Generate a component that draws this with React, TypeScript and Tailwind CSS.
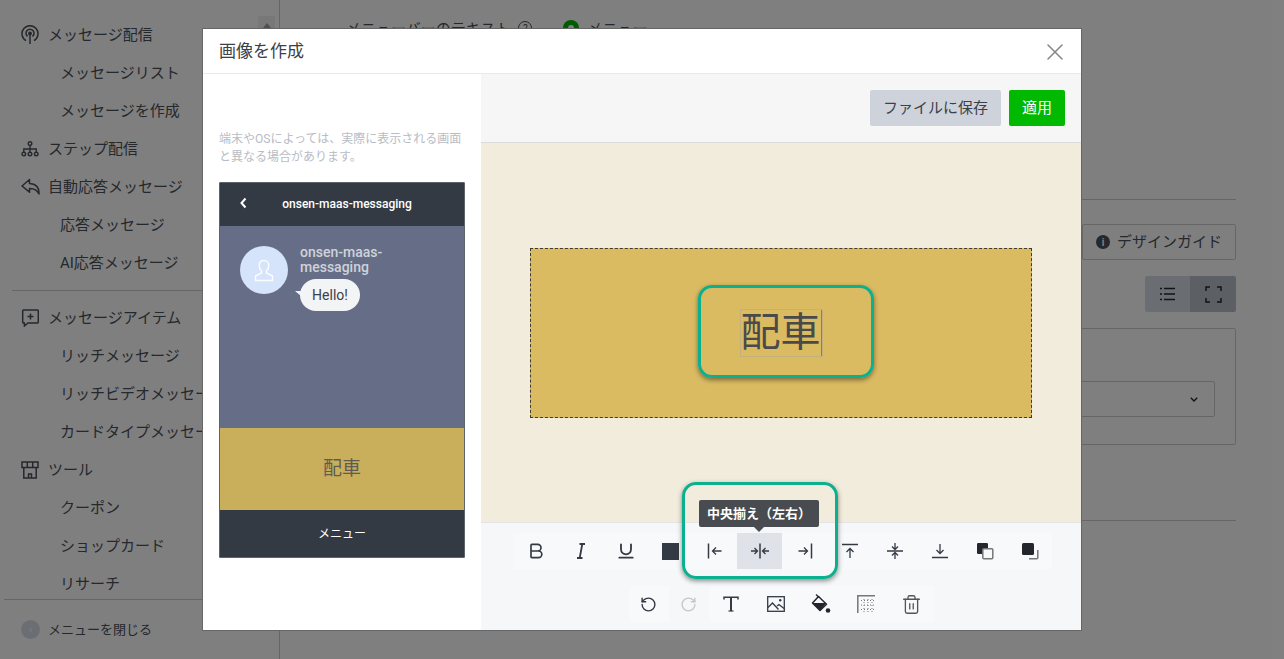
import React from 'react';
import { Bold, Underline, RotateCcw, RotateCw, Trash2, X } from 'lucide-react';

// Sidebar icons
const BroadcastIcon = () => (
  <svg width="18" height="20" viewBox="0 0 18 20" fill="none" stroke="currentColor" strokeWidth="1.5">
    <path d="M5 15.6A8 8 0 1 1 13 15.6" />
    <path d="M6.6 11.4A4 4 0 1 1 11.4 11.4" />
    <circle cx="9" cy="8.4" r="1.2" fill="currentColor" />
    <path d="M9 9v10" />
  </svg>
);

const SitemapIcon = () => (
  <svg width="18" height="16" viewBox="0 0 18 16" fill="none" stroke="currentColor" strokeWidth="1.4">
    <circle cx="9" cy="2.6" r="1.8" />
    <circle cx="2.8" cy="13" r="1.8" />
    <circle cx="9" cy="13" r="1.8" />
    <circle cx="15.2" cy="13" r="1.8" />
    <path d="M9 4.4v6.8M2.8 11.2V8h12.4v3.2" />
  </svg>
);

const ReplyIcon = () => (
  <svg width="20" height="18" viewBox="0 0 20 18" fill="none" stroke="currentColor" strokeWidth="1.5" strokeLinejoin="round">
    <path d="M8.5 1.5 1 8l7.5 6.2v-3.8c4.6-.2 7.4 1 9.5 5.6.3-6-2.5-10-9.5-10.4z" />
  </svg>
);

const MessagePlusIcon = () => (
  <svg width="18" height="18" viewBox="0 0 18 18" fill="none" stroke="currentColor" strokeWidth="1.5">
    <path d="M2.5 1h14a.8.8 0 0 1 .8.8v11.4a.8.8 0 0 1-.8.8H7l-3.6 3v-3H2.500a.8.8 0 0 1-.8-.8V1.800a.8.8 0 0 1 .8-.8z" />
    <path d="M9.500 4.500v6M6.500 7.500h6" />
  </svg>
);

const StoreIcon = () => (
  <svg width="18" height="18" viewBox="0 0 18 18" fill="none" stroke="currentColor" strokeWidth="1.5">
    <path d="M1 1h16v5.500H1zM6.300 1v5.500M11.700 1v5.500" />
    <path d="M2.800 6.500V17h12.400V6.500M7.500 17v-4h3v4" />
  </svg>
);

// Editor toolbar icons
const ItalicIcon = () => (
  <svg width="10" height="16" viewBox="0 0 10 16" fill="none" stroke="currentColor" strokeWidth="1.800">
    <path d="M3.500 1H9M1 15h5.500M6.300 1 3.700 15" />
  </svg>
);

const AlignLeftIcon = () => (
  <svg width="16" height="16" viewBox="0 0 16 16" fill="none" stroke="currentColor" strokeWidth="1.3">
    <path d="M1.500 0.500v15" strokeWidth="1.500" />
    <path d="M14.500 8H5.500M9 4.500 5.500 8 9 11.500" />
  </svg>
);

const AlignCenterIcon = () => (
  <svg width="20" height="16" viewBox="0 0 20 16" fill="none" stroke="currentColor" strokeWidth="1.3">
    <path d="M10 0.500v15" strokeWidth="1.500" />
    <path d="M1 8h6M4.500 5 7.500 8l-3 3M19 8h-6M15.500 5l-3 3 3 3" />
  </svg>
);

const AlignRightIcon = () => (
  <svg width="16" height="16" viewBox="0 0 16 16" fill="none" stroke="currentColor" strokeWidth="1.3">
    <path d="M14.500 0.500v15" strokeWidth="1.500" />
    <path d="M1.500 8h9M7 4.500 10.500 8 7 11.500" />
  </svg>
);

const AlignTopIcon = () => (
  <svg width="16" height="16" viewBox="0 0 16 16" fill="none" stroke="currentColor" strokeWidth="1.3">
    <path d="M0 1.500h16" strokeWidth="1.500" />
    <path d="M8 15V5.500M4.500 9 8 5.500 11.500 9" />
  </svg>
);

const AlignMiddleIcon = () => (
  <svg width="16" height="18" viewBox="0 0 16 18" fill="none" stroke="currentColor" strokeWidth="1.3">
    <path d="M0 9h16" strokeWidth="1.500" />
    <path d="M8 1v6M5 4.500 8 7.500l3-3M8 17v-6M5 13.500l3-3 3 3" />
  </svg>
);

const AlignBottomIcon = () => (
  <svg width="16" height="16" viewBox="0 0 16 16" fill="none" stroke="currentColor" strokeWidth="1.3">
    <path d="M0 14.500h16" strokeWidth="1.500" />
    <path d="M8 1v9.500M4.500 7 8 10.500 11.500 7" />
  </svg>
);

const BringFrontIcon = () => (
  <svg width="18" height="18" viewBox="0 0 18 18">
    <rect x="1" y="1" width="11" height="11" rx="1.200" fill="#23262c" />
    <rect x="6.800" y="6.800" width="10" height="10" rx="1" fill="#f8f9fb" stroke="#777" strokeWidth="1.500" />
  </svg>
);

const SendBackIcon = () => (
  <svg width="18" height="18" viewBox="0 0 18 18">
    <path d="M16.800 8v7.800a1 1 0 0 1-1 1H8" fill="none" stroke="#777" strokeWidth="1.500" />
    <rect x="1" y="1" width="12" height="12" rx="1.500" fill="#23262c" />
  </svg>
);

const TextIcon = () => (
  <svg width="16" height="16" viewBox="0 0 16 16" fill="none" stroke="currentColor">
    <path d="M1 3.500V1.200h14v2.300" strokeWidth="1.500" />
    <path d="M8 1.200V15" strokeWidth="2" />
    <path d="M5.500 15h5" strokeWidth="1.200" />
  </svg>
);

const ImageIcon = () => (
  <svg width="18" height="16" viewBox="0 0 18 16" fill="none" stroke="currentColor" strokeWidth="1.300">
    <rect x="0.700" y="0.700" width="16.600" height="14.600" />
    <path d="M1 11.500 5.500 7l6 6.500M10 10l2-1.500 5 4" />
    <circle cx="13.200" cy="4.200" r="1.200" fill="currentColor" stroke="none" />
  </svg>
);

const FillIcon = () => (
  <svg width="20" height="20" viewBox="0 0 20 20">
    <path d="M7.500 2.500 15.500 10.300 9 16.500 1.500 9z" fill="none" stroke="#23262c" strokeWidth="1.500" strokeLinejoin="round" />
    <path d="M1.500 9h14l-6.500 7.500z" fill="#23262c" />
    <path d="M5 .5l3 3" stroke="#23262c" strokeWidth="1.300" />
    <circle cx="17" cy="16.500" r="2.300" fill="#23262c" />
  </svg>
);

const GridCropIcon = () => (
  <svg width="18" height="18" viewBox="0 0 18 18" fill="none">
    <path d="M.8 18V.8H18" stroke="#777" strokeWidth="1.500" />
    <path d="M4 5.500h14M4 10h14M4 14.500h14M7 4v14M11 4v14M15 4v14" stroke="#777" strokeWidth="1" strokeDasharray="1 2" />
  </svg>
);

const navItems: { label: string; sub?: boolean; icon?: React.ReactNode; divider?: boolean }[] = [
  { label: 'メッセージ配信', icon: <BroadcastIcon /> },
  { label: 'メッセージリスト', sub: true },
  { label: 'メッセージを作成', sub: true },
  { label: 'ステップ配信', icon: <SitemapIcon /> },
  { label: '自動応答メッセージ', icon: <ReplyIcon /> },
  { label: '応答メッセージ', sub: true },
  { label: 'AI応答メッセージ', sub: true, divider: true },
  { label: 'メッセージアイテム', icon: <MessagePlusIcon /> },
  { label: 'リッチメッセージ', sub: true },
  { label: 'リッチビデオメッセージ', sub: true },
  { label: 'カードタイプメッセージ', sub: true },
  { label: 'ツール', icon: <StoreIcon /> },
  { label: 'クーポン', sub: true },
  { label: 'ショップカード', sub: true },
  { label: 'リサーチ', sub: true },
];

const Sidebar = () => (
  <aside className="relative flex h-full w-[280px] shrink-0 flex-col border-r border-[#c9ccd1] text-[15px] text-[#4b5059]">
    <div className="absolute right-[4px] top-[16px] flex h-[14px] w-[17px] items-start justify-center bg-[#f0f0f0] pt-[7px]">
      <div className="h-0 w-0 border-x-[4px] border-b-[5px] border-x-transparent border-b-[#a0a0a0]" />
    </div>
    <nav className="min-h-0 flex-1 overflow-hidden pl-[12px] pt-[16px]">
      {navItems.map((item) => (
        <React.Fragment key={item.label}>
          <div className={`flex h-[38px] items-center whitespace-nowrap ${item.sub ? 'pl-[48px]' : 'pl-[9px]'}`}>
            {item.icon && <span className="flex w-[27px] shrink-0 items-center">{item.icon}</span>}
            {item.label}
          </div>
          {item.divider && (
            <div className="flex h-[17px] items-center">
              <div className="h-px w-full bg-[#c9ccd1]" />
            </div>
          )}
        </React.Fragment>
      ))}
    </nav>
    <div className="ml-[4px] flex h-[60px] items-center gap-[8px] border-t border-[#c9ccd1] pl-[17px] text-[13px]">
      <div className="flex h-[19px] w-[19px] items-center justify-center rounded-full bg-[#d6dee9] text-[10px] text-white">‹</div>
      メニューを閉じる
    </div>
  </aside>
);

const MainBehind = () => (
  <main className="min-w-0 flex-1 pr-[48px] text-[15px] text-[#4b5059]">
    <div className="flex h-[58px] items-start gap-[8px] pl-[66px] pt-[18px]">
      <span>メニューバーのテキスト</span>
      <span className="mt-[3px] flex h-[14px] w-[14px] items-center justify-center rounded-full border border-[#4b5059] text-[10px]">?</span>
      <span className="ml-[23px] mt-[2px] flex h-[16px] w-[16px] items-center justify-center rounded-full bg-[#00b900]">
        <span className="h-[6px] w-[6px] rounded-full bg-white" />
      </span>
      <span>メニュー</span>
    </div>
    <div className="mt-[141px] h-px bg-[#ccc]" />
    <div className="mt-[24px] flex justify-end">
      <div className="flex h-[36px] w-[154px] items-center gap-[7px] rounded-[2px] border border-[#ccc] pl-[13px]">
        <span className="flex h-[14px] w-[14px] items-center justify-center rounded-full bg-[#4b5059] text-[10px] font-bold text-white">i</span>
        デザインガイド
      </div>
    </div>
    <div className="mt-[16px] flex justify-end">
      <div className="flex h-[36px] w-[91px] overflow-hidden rounded-[2px] text-[#23262c]">
        <div className="flex w-[45px] items-center justify-center bg-[#d5dae2]">
          <svg width="15" height="14" viewBox="0 0 15 14" fill="none" stroke="currentColor" strokeWidth="1.300">
            <path d="M4 1.500h11M4 7h11M4 12.500h11M0 1.500h2M0 7h2M0 12.500h2" />
          </svg>
        </div>
        <div className="flex w-[46px] items-center justify-center bg-[#b8bec9]">
          <svg width="17" height="17" viewBox="0 0 17 17" fill="none" stroke="currentColor" strokeWidth="1.500">
            <path d="M1 5V1h4M12 1h4v4M16 12v4h-4M5 16H1v-4" />
          </svg>
        </div>
      </div>
    </div>
    <div className="mt-[16px] h-[117px] rounded-[2px] border border-[#ccc] px-[20px] pt-[52px]">
      <div className="flex h-[36px] items-center justify-end rounded-[2px] border border-[#ccc] pr-[16px]">
        <svg width="8" height="5" viewBox="0 0 8 5" fill="none" stroke="#23262c" strokeWidth="1.400">
          <path d="M.8.8 4 4 7.200.8" />
        </svg>
      </div>
    </div>
    <div className="mt-[75px] h-px bg-[#ccc]" />
  </main>
);

const PhonePreview = () => (
  <div className="w-[278px] shrink-0 bg-white px-[16px] pt-[56px]">
    <p className="text-[12px] leading-[18px] text-[#b7bcc4]">端末やOSによっては、実際に表示される画面と異なる場合があります。</p>
    <div className="mt-[16px] flex h-[376px] w-[246px] flex-col overflow-hidden rounded-[1px] border border-[#5d626b] bg-[#343a43]">
      <div className="relative flex h-[43px] shrink-0 items-center justify-center pb-[2px] pl-[10px] text-[12px] font-medium text-white">
        <svg className="absolute left-[20px] top-[14px]" width="7" height="12" viewBox="0 0 7 12" fill="none" stroke="white" strokeWidth="2">
          <path d="M5.500 1.500 1.500 6l4 4.500" />
        </svg>
        onsen-maas-messaging
      </div>
      <div className="flex h-[202px] shrink-0 gap-[12px] bg-[#666e87] pl-[20px] pt-[20px]">
        <div className="flex h-[48px] w-[48px] shrink-0 items-center justify-center rounded-full bg-[#d5e3fb]">
          <svg width="20" height="23" viewBox="0 0 20 23" fill="none" stroke="white" strokeWidth="1.500" opacity="0.9">
            <path d="M10 1.500c-3 0-4.800 2.200-4.800 5 0 2.300 1 4.200 2.400 5.300v2.200L1.500 17v4.500h17V17l-6.100-3v-2.200c1.400-1.100 2.400-3 2.400-5.300 0-2.800-1.800-5-4.800-5z" />
          </svg>
        </div>
        <div className="-mt-[1px]">
          <div className="w-[110px] text-[14px] font-medium leading-[15px] text-[#cfd2d9]">onsen-maas-messaging</div>
          <div className="relative mt-[4px] flex h-[32px] w-[60px] items-center justify-center rounded-full bg-[#f3f4f6] text-[14px] text-[#3c4048]">
            Hello!
            <div className="absolute -left-[5px] top-[12px] h-0 w-0 border-l-[6px] border-t-[5px] border-l-transparent border-t-[#f3f4f6]" />
          </div>
        </div>
      </div>
      <div className="flex h-[82px] shrink-0 items-center justify-center bg-[#c9ae5b] text-[19px] text-[#5f5c52]">配車</div>
      <div className="flex flex-1 items-center justify-center text-[12px] text-white">メニュー</div>
    </div>
  </div>
);

const ToolBtn = ({ children, active, narrow }: { children: React.ReactNode; active?: boolean; narrow?: boolean }) => (
  <div className={`flex h-[36px] items-center justify-center text-[#343a43] ${narrow ? 'w-[44px]' : 'w-[45px]'} ${active ? 'bg-[#dfe2e8]' : ''}`}>
    {children}
  </div>
);

const EditorPane = () => (
  <div className="flex min-w-0 flex-1 flex-col bg-[#f6f7f8]">
    <div className="flex h-[69px] shrink-0 items-center justify-end gap-[8px] border-b border-[#d9dbde] bg-[#f6f6f7] pr-[16px] text-[15px]">
      <button className="h-[36px] w-[131px] rounded-[2px] bg-[#ced3db] text-[#3c4048]">ファイルに保存</button>
      <button className="h-[36px] w-[56px] rounded-[2px] bg-[#00b900] text-white">適用</button>
    </div>
    <div className="flex h-[380px] shrink-0 items-center justify-center border-b border-[#e3e4e6] bg-[#f2ecdc]">
      <div className="relative flex h-[170px] w-[502px] items-center justify-center border border-dashed border-[#3b3b3b] bg-[#dbbb62]">
        <div className="flex h-[48px] w-[83px] items-center whitespace-nowrap border border-[#c4b07a] text-[40px] leading-none text-[#4a4a4a]">
          配車
          <span className="h-[46px] w-px shrink-0 bg-[#8a8060]" />
        </div>
        <div className="absolute left-[167px] top-[36px] h-[93px] w-[176px] rounded-[14px] border-[3px] border-[#0bb08f] shadow-[0_2px_5px_rgba(0,0,0,0.45)]" />
      </div>
    </div>
    <div className="relative flex flex-1 flex-col items-center pt-[10px]">
      <div className="ml-[3px] flex bg-[#f8f9fb]">
        <ToolBtn><Bold size={20} strokeWidth={2} /></ToolBtn>
        <ToolBtn><ItalicIcon /></ToolBtn>
        <ToolBtn><Underline size={20} strokeWidth={2.200} /></ToolBtn>
        <ToolBtn narrow><div className="h-[17px] w-[17px] bg-[#343a43]" /></ToolBtn>
        <ToolBtn><AlignLeftIcon /></ToolBtn>
        <ToolBtn active><AlignCenterIcon /></ToolBtn>
        <ToolBtn><AlignRightIcon /></ToolBtn>
        <ToolBtn><AlignTopIcon /></ToolBtn>
        <ToolBtn><AlignMiddleIcon /></ToolBtn>
        <ToolBtn><AlignBottomIcon /></ToolBtn>
        <ToolBtn><BringFrontIcon /></ToolBtn>
        <ToolBtn><SendBackIcon /></ToolBtn>
      </div>
      <div className="mt-[17px] flex">
        <div className="w-[40px] bg-[#f8f9fb]">
          <div className="flex h-[36px] items-center justify-center text-[#343a43]"><RotateCcw size={17} /></div>
        </div>
        <div className="flex h-[36px] w-[40px] items-center justify-center text-[#c4c7cc]"><RotateCw size={17} /></div>
        <div className="flex bg-[#f8f9fb]">
          <ToolBtn><TextIcon /></ToolBtn>
          <ToolBtn><ImageIcon /></ToolBtn>
          <ToolBtn><FillIcon /></ToolBtn>
          <ToolBtn><GridCropIcon /></ToolBtn>
          <ToolBtn><Trash2 size={21} strokeWidth={1.500} className="text-[#555]" /></ToolBtn>
        </div>
      </div>

      {/* tooltip over the center align button */}
      <div className="absolute left-[218px] -top-[23px] flex h-[27px] w-[120px] items-center justify-center rounded-[2px] bg-[#484b50] text-[13px] font-bold text-white">
        中央揃え（左右）
        <div className="absolute left-[55px] top-[27px] h-0 w-0 border-x-[5px] border-t-[5px] border-x-transparent border-t-[#484b50]" />
      </div>
      {/* green annotation */}
      <div className="absolute left-[201px] -top-[41px] h-[97px] w-[156px] rounded-[14px] border-[3px] border-[#0bb08f] shadow-[0_2px_5px_rgba(0,0,0,0.45)]" />
    </div>
  </div>
);

const Modal = () => (
  <div className="flex h-[601px] w-[878px] flex-col bg-white shadow-[0_0_0_1px_#666]">
    <div className="flex h-[45px] shrink-0 items-center justify-between border-b border-[#e8e9eb] pl-[16px] pr-[12px] pt-[1px] text-[17px] text-[#3c4048]">
      画像を作成
      <X size={28} strokeWidth={1.300} className="text-[#888]" />
    </div>
    <div className="flex min-h-0 flex-1">
      <PhonePreview />
      <EditorPane />
    </div>
  </div>
);

export default function App() {
  return (
    <div className="relative flex h-[659px] w-[1284px] overflow-hidden bg-white font-['Roboto','Noto_Sans_CJK_JP',sans-serif]">
      <Sidebar />
      <MainBehind />
      <div className="absolute inset-0 bg-black/50 pl-[203px] pt-[29px]">
        <Modal />
      </div>
    </div>
  );
}
